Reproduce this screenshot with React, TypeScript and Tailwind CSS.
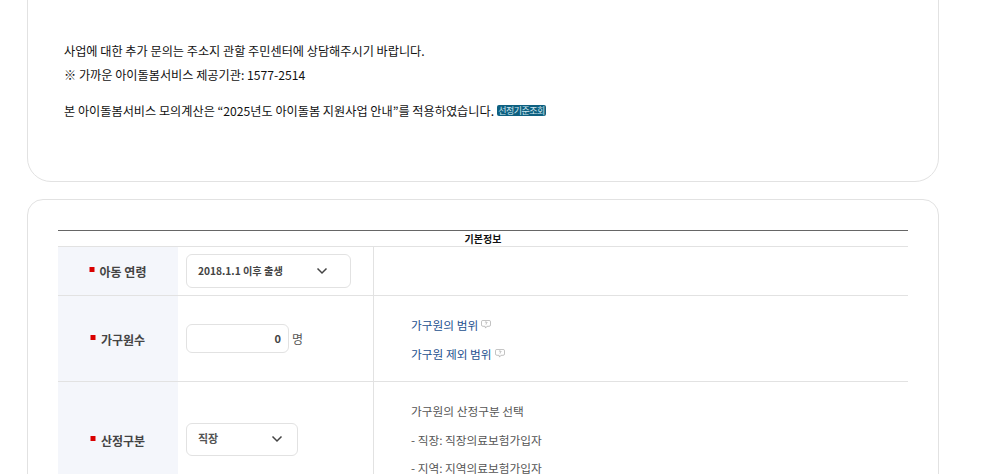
const font = { fontFamily: '"Noto Sans CJK KR", "Noto Sans", sans-serif' };

function Chevron() {
  return (
    <svg width="12" height="8" viewBox="0 0 12 8" fill="none" stroke="#444" strokeWidth="1.5">
      <path d="M1.5 1.5 L6 6 L10.5 1.5" />
    </svg>
  );
}

function Help() {
  return (
    <svg width="10" height="9" viewBox="0 0 11 10" fill="none" className="ml-[3px] inline-block align-[1px]">
      <path d="M2 .5h7a1.5 1.5 0 0 1 1.5 1.5v3.5A1.5 1.5 0 0 1 9 7H6.5L5 9 4.5 7H2A1.5 1.5 0 0 1 .5 5.5V2A1.5 1.5 0 0 1 2 .5Z" stroke="#aaa" strokeWidth=".8" />
      <path d="M4.3 2.7c.2-.7 2.3-.7 2.3.3 0 .7-1 .7-1.1 1.3M5.5 5v.6" stroke="#888" strokeWidth=".7" />
    </svg>
  );
}

function Label({ children, shift }: { children: string; shift: string }) {
  return (
    <div className={`flex w-[120px] shrink-0 items-center justify-center bg-[#f4f6fb] text-[12px] font-bold text-[#444] ${shift}`}>
      <span className="flex items-start">
        <span className="mr-[5px] mt-[4px] size-[5px] -translate-x-[0.5px] bg-[#d90000]" />
        {children}
      </span>
    </div>
  );
}

export default function App() {
  return (
    <div className="h-[474px] w-[991px] overflow-hidden bg-white text-[12px] text-[#222]" style={font}>
      <div className="ml-[27px] -mt-[30px] h-[212px] w-[912px] rounded-[24px] border border-[#e2e2e2] pl-[36px] pt-[68px] text-[12.17px] text-[#111]">
        <p className="h-[24px] leading-[24px]">사업에 대한 추가 문의는 주소지 관할 주민센터에 상담해주시기 바랍니다.</p>
        <p className="h-[24px] leading-[24px]">※ 가까운 아이돌봄서비스 제공기관: 1577-2514</p>
        <p className="mt-[12px] flex h-[24px] items-center leading-[24px]">
          본 아이돌봄서비스 모의계산은 “2025년도 아이돌봄 지원사업 안내”를 적용하였습니다.
          <span className="ml-[3px] -translate-y-[1px] h-[11px] w-[49px] rounded-[2px] bg-[#0e6080] text-center text-[9px] leading-[11px] tracking-[-0.5px] text-[#cfe6ef]">선정기준조회</span>
        </p>
      </div>

      <div className="ml-[27px] mt-[17px] h-[300px] w-[912px] rounded-[16px] border border-[#e2e2e2] px-[30px] pt-[30px]">
        <div className="w-[850px] border-t border-[#666]">
          <div className="h-[15px] text-center text-[10px] font-bold leading-[16px] text-[#111]">기본정보</div>

          <div className="flex h-[50px] border-y border-[#e2e2e2]">
            <Label shift="pt-[2px]">아동 연령</Label>
            <div className="flex w-[195px] shrink-0 items-center pl-[8px]">
              <div className="flex h-[34px] w-[165px] items-center justify-between rounded-[6px] border border-[#e2e2e2] pl-[11px] pr-[22px] text-[10.2px] font-bold text-[#444]">
                2018.1.1 이후 출생
                <Chevron />
              </div>
            </div>
            <div className="flex-1 border-l border-[#e2e2e2]" />
          </div>

          <div className="flex h-[86px] border-b border-[#e2e2e2]">
            <Label shift="pt-[2px]">가구원수</Label>
            <div className="flex w-[195px] shrink-0 items-center pl-[8px]">
              <div className="flex h-[29px] w-[103px] items-center justify-end rounded-[6px] border border-[#e2e2e2] pr-[7px] text-[11px] font-bold text-[#444]">0</div>
              <span className="ml-[3px] text-[#555]">명</span>
            </div>
            <div className="flex flex-1 flex-col justify-center gap-[11px] border-l border-[#e2e2e2] pl-[37px] pt-[2px] text-[11.7px] text-[#24518f]">
              <div className="h-[18px] leading-[18px]">가구원의 범위<Help /></div>
              <div className="h-[18px] leading-[18px]">가구원 제외 범위<Help /></div>
            </div>
          </div>

          <div className="flex h-[120px]">
            <Label shift="pb-[3px]">산정구분</Label>
            <div className="flex w-[195px] shrink-0 items-center pb-[6px] pl-[8px]">
              <div className="flex h-[33px] w-[112px] items-center justify-between rounded-[6px] border border-[#e2e2e2] pl-[11px] pr-[14px] text-[11px] font-bold text-[#555]">
                <span className="-translate-y-[1px]">직장</span>
                <Chevron />
              </div>
            </div>
            <div className="flex flex-1 flex-col gap-[10.5px] border-l border-[#e2e2e2] pl-[37px] pt-[20px] text-[11.7px] text-[#555]">
              <div className="h-[18px] leading-[18px]">가구원의 산정구분 선택</div>
              <div className="h-[18px] leading-[18px]">- 직장: 직장의료보험가입자</div>
              <div className="h-[18px] leading-[18px]">- 지역: 지역의료보험가입자</div>
            </div>
          </div>
        </div>
      </div>
    </div>
  );
}
